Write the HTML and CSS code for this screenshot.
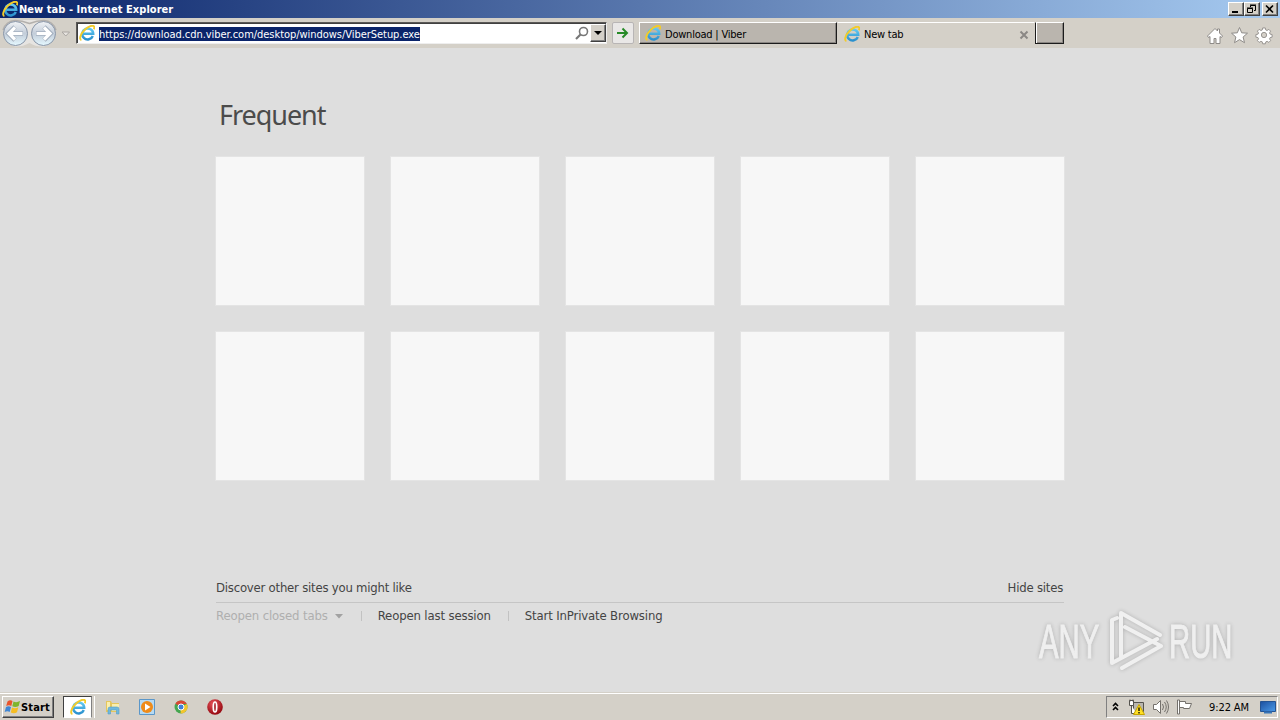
FILE: index.html
```html
<!DOCTYPE html>
<html lang="en">
<head>
    <meta charset="UTF-8">
    <title>New tab - Internet Explorer</title>
    <link rel="stylesheet" href="styles.css">
</head>
<body>
    <svg class="defs" width="0" height="0">
        <defs>
            <linearGradient id="ie-blue" x1="0" y1="0" x2="0" y2="1">
                <stop offset="0" stop-color="#62c9f2"/>
                <stop offset="1" stop-color="#2b91ce"/>
            </linearGradient>
            <linearGradient id="round" x1="0" y1="0" x2="0" y2="1">
                <stop offset="0" stop-color="#f1f3f6"/>
                <stop offset="0.5" stop-color="#c3cdd9"/>
                <stop offset="1" stop-color="#e5f8ff"/>
            </linearGradient>
            <linearGradient id="screen" x1="0" y1="0" x2="1" y2="1">
                <stop offset="0" stop-color="#1b4f9f"/>
                <stop offset="1" stop-color="#4b9be8"/>
            </linearGradient>
            <radialGradient id="opera-red" cx="0.4" cy="0.3" r="0.7">
                <stop offset="0" stop-color="#e8545b"/>
                <stop offset="1" stop-color="#95070f"/>
            </radialGradient>
            <symbol id="ie" viewBox="0 0 16 16">
                <path d="M13.800 11A5.500 5.500 0 1 1 14.200 8.800H4.500" fill="none" stroke="url(#ie-blue)" stroke-width="2.500"/>
                <path d="M2.400 15C-.2 14.500 1.500 9 5.500 5S14 -.2 15.100 1.500c.4.800.2 1.900-.3 2.700" fill="none" stroke="#f2cb2a" stroke-width="1.900"/>
            </symbol>
        </defs>
    </svg>

    <header class="titlebar">
        <svg class="ie-icon"><use href="#ie"/></svg>
        <span class="window-title">New tab - Internet Explorer</span>
        <div class="window-buttons">
            <span class="win-btn"><svg width="12" height="10"><path d="M2 8h6" stroke="#000" stroke-width="2"/></svg></span>
            <span class="win-btn"><svg width="12" height="10"><path d="M4.500 3V1.500h5v5H8M4 1h6M1.500 4.500h5v4h-5zM1 4h6" fill="none" stroke="#000"/></svg></span>
            <span class="win-btn close"><svg width="12" height="10"><path d="M2 1.500l7 7M9 1.500l-7 7" stroke="#000" stroke-width="1.600"/></svg></span>
        </div>
    </header>

    <nav class="toolbar">
        <svg class="history" width="76" height="30">
            <path d="M15 2H44A13.500 13.500 0 0 1 44 28.500Q36 29 29.500 25Q22 29 15 28.500A13.500 13.500 0 0 1 15 2" fill="#e6e4e1"/>
            <path d="M15 2.500Q22 2.500 29.500 5.500Q37 2.500 44 2.500A13 13 0 0 1 56 12M3 12A13 13 0 0 1 15 2.500" fill="none" stroke="#b3b0ad" stroke-width="1.500"/>
            <g fill="url(#round)" stroke="#8996a8">
                <circle cx="15.500" cy="15.500" r="12"/>
                <circle cx="43.500" cy="15.500" r="12"/>
            </g>
            <g fill="none" stroke="#a3afbe" stroke-width="4.600">
                <path d="M23 15.500H9M15 9l-6.500 6.500 6.500 6.500M36 15.500h14M44 9l6.500 6.500L44 22"/>
            </g>
            <g fill="none" stroke="#fff" stroke-width="3.200">
                <path d="M22.500 15.500H9M15 9.500l-6 6 6 6M36.500 15.500h14M44 9.500l6 6-6 6"/>
            </g>
            <path d="M62 14h7.500l-3.700 4z" fill="#e8e5e1" stroke="#aaa6a2"/>
        </svg>
        <div class="address">
            <svg class="ie-icon"><use href="#ie"/></svg>
            <span class="url">https://download.cdn.viber.com/desktop/windows/ViberSetup.exe</span>
            <svg class="search" width="15" height="15"><circle cx="8.500" cy="5.500" r="4" fill="none" stroke="#777" stroke-width="1.600"/><path d="M5.500 8.500L1 13" stroke="#777" stroke-width="2.200"/></svg>
            <span class="dropdown"><svg width="8" height="4"><path d="M0 0h8L4 4z"/></svg></span>
        </div>
        <span class="go"><svg width="14" height="12"><path d="M1 6h10M6.500 1.500L11 6l-4.500 4.500" fill="none" stroke="#278a27" stroke-width="2"/></svg></span>
        <div class="tab">
            <svg class="ie-icon"><use href="#ie"/></svg>
            <span class="tab-title">Download | Viber</span>
        </div>
        <div class="tab active">
            <svg class="ie-icon"><use href="#ie"/></svg>
            <span class="tab-title">New tab</span>
            <svg class="tab-close" width="10" height="10"><path d="M1.500 1.500l7 7M8.500 1.500l-7 7" stroke="#8b8885" stroke-width="2"/></svg>
        </div>
        <div class="tab new-tab"></div>
        <svg class="tools" width="68" height="20" fill="#fff" stroke="#8e8b88">
            <path d="M1.500 10L9 2.500l2.500 2.500V3h2v4l3 3-1 1.500-1.500-1V17.500h-4v-5H8v5H4v-7l-1.500 1z"/>
            <path d="M33.500 1.500l2.200 5.300 5.800.4-4.400 3.800 1.400 5.700-5-3.100-5 3.100 1.400-5.700-4.400-3.800 5.800-.4z"/>
            <g transform="translate(58 9) scale(.88)">
                <path d="M-1.500-8h3l.5 2.300 1.500.6 2-1.300 2 2-1.200 2 .6 1.400 2.300.5v3l-2.300.5-.6 1.400 1.200 2-2 2-2-1.200-1.400.6-.6 2.200h-3l-.5-2.200-1.500-.6-2 1.200-2-2 1.300-2-.6-1.400-2.400-.5v-3l2.400-.5.600-1.400-1.300-2 2-2 2 1.300 1.500-.6z"/>
                <circle r="3" fill="#d4d0c8"/>
            </g>
        </svg>
    </nav>

    <main class="page">
        <h1>Frequent</h1>
        <div class="tiles">
            <div class="tile"></div>
            <div class="tile"></div>
            <div class="tile"></div>
            <div class="tile"></div>
            <div class="tile"></div>
            <div class="tile"></div>
            <div class="tile"></div>
            <div class="tile"></div>
            <div class="tile"></div>
            <div class="tile"></div>
        </div>
        <div class="discover">
            <span class="discover-link">Discover other sites you might like</span>
            <span class="hide-link">Hide sites</span>
        </div>
        <div class="links">
            <span class="reopen disabled">Reopen closed tabs</span>
            <svg class="arrow" width="8" height="5"><path d="M0 0h8L4 4.500z" fill="#a2a2a2"/></svg>
            <span class="last-session">Reopen last session</span>
            <span class="private">Start InPrivate Browsing</span>
        </div>
        <div class="watermark">
            <span>ANY</span>
            <svg width="60" height="66" fill="none" stroke="#f3f3f3" stroke-width="4" stroke-linecap="round" stroke-linejoin="round">
                <path d="M14 49V5l39 22M18 19l36 19-39 22M10 10L5 12V55L50 31" stroke-width="4"/>
            </svg>
            <span>RUN</span>
        </div>
    </main>

    <footer class="taskbar">
        <div class="start">
            <svg width="17" height="16">
                <path d="M3.500 2.500Q6 .5 8.500 2L7.300 7Q5 5.500 2.200 7z" fill="#e9542b"/>
                <path d="M9.500 2.500Q12.500 4 16 2L14.700 7Q11.500 9 8.300 7.300z" fill="#7eb52e"/>
                <path d="M2 8Q4.500 6.500 7 8L5.700 13Q3.500 11.500.7 13z" fill="#3f86d4"/>
                <path d="M8 8.500Q11 10 14.300 8.300L13 13.300Q10 15 6.800 13.500z" fill="#f6bd22"/>
            </svg>
            <span>Start</span>
        </div>
        <div class="task-stack"><div class="task-active"><svg class="ie-icon"><use href="#ie"/></svg></div></div>
        <div class="pinned">
            <svg width="18" height="18">
                <path d="M2 3h5l1 2h7v9H2z" fill="#e5c65c"/>
                <path d="M3 4h3v8H3zM8 6h7v7H8z" fill="#f9eeae"/>
                <path d="M4 16V11q0-2 2-2h7q2 0 2 2v5h-2.500v-4h-6v4z" fill="#70b8dc" stroke="#559ec8" stroke-width=".6"/>
            </svg>
            <svg width="18" height="18">
                <path d="M1.500 1.500h15v15h-15z" fill="#b6daf3" stroke="#5b97c9"/>
                <circle cx="9" cy="9" r="6" fill="#ef8b19"/>
                <path d="M7 5.500L12.500 9 7 12.500z" fill="#fff"/>
            </svg>
            <svg width="18" height="18">
                <circle cx="9" cy="9" r="6.500" fill="#45a650"/>
                <path d="M9 9L3.400 5.700A6.500 6.500 0 0 1 14.800 6H9z" fill="#d94635"/>
                <path d="M9 9l5.800-3A6.500 6.500 0 0 1 8.500 15.500z" fill="#f3c52c"/>
                <circle cx="9" cy="9" r="3" fill="#3e80d8" stroke="#fff"/>
            </svg>
            <svg width="18" height="18">
                <circle cx="9" cy="9" r="7.800" fill="url(#opera-red)"/>
                <ellipse cx="9" cy="9" rx="1.700" ry="5" fill="#a5232a" stroke="#fff" stroke-width="1.700"/>
            </svg>
        </div>
        <div class="tray">
            <svg class="chevrons" width="8" height="10"><path d="M1 4l2.500-2.500L6 4M1 8l2.500-2.500L6 8" fill="none" stroke="#000" stroke-width="1.600"/></svg>
            <svg class="network" width="18" height="17">
                <path d="M5.500 3.500h10v9h-10z" fill="#b9b6af" stroke="#55534e"/>
                <path d="M1.500 1.500h4v5h-4zM3.500 6.500v8h5M2 .5v2M5 .5v2" fill="#fff" stroke="#55534e"/>
                <path d="M11 5.500l5.500 10h-11z" fill="#ffdf25" stroke="#c7a500"/>
                <path d="M11 8.500v3.500M11 13v1.500" stroke="#000" stroke-width="1.300"/>
            </svg>
            <svg class="volume" width="18" height="16" fill="none" stroke="#74716c">
                <path d="M1.500 5.500h3l4-4v13l-4-4h-3z" fill="#fff"/>
                <path d="M10.500 5q2 3 0 6M12.500 3q3.500 5 0 10M14.500 1.500q4 6.500 0 13"/>
            </svg>
            <svg class="flag" width="17" height="16">
                <path d="M3.500 2.500h6v2h6l-2 5h-6v-1h-4z" fill="#fff" stroke="#74716c"/>
                <path d="M1.500 1h2v14h-2z" fill="#fff" stroke="#74716c"/>
            </svg>
            <span class="clock">9:22 AM</span>
            <svg class="desktop" width="16" height="14">
                <path d="M.5 1.500h15v10H.5z" fill="url(#screen)" stroke="#245392"/>
                <path d="M4 12.500h8" stroke="#3875b7" stroke-width="2"/>
            </svg>
        </div>
    </footer>
</body>
</html>
```
FILE: styles.css
```css
* {
    box-sizing: border-box;
}
body {
    margin: 0;
    width: 1280px;
    height: 720px;
    overflow: hidden;
    display: flex;
    flex-direction: column;
    background-color: #dedede;
    color: #000;
    font-family: "DejaVu Sans Condensed", "DejaVu Sans", sans-serif;
    font-stretch: condensed;
    font-size: 11px;
    white-space: nowrap;
}
svg {
    display: block;
    flex: none;
}
.defs {
    position: absolute;
}
.ie-icon {
    width: 16px;
    height: 16px;
}
.titlebar {
    height: 18px;
    display: flex;
    align-items: center;
    padding: 0 2px;
    background: linear-gradient(90deg, #0a246a, #a6caf0);
    color: #fff;
    font-weight: bold;
}
.window-title {
    margin-left: 1px;
    letter-spacing: 0.05px;
}
.window-buttons {
    display: flex;
    margin-left: auto;
}
.win-btn {
    width: 16px;
    height: 14px;
    padding: 1px;
    background-color: #d4d0c8;
    border: 1px solid;
    border-color: #fff #404040 #404040 #fff;
    box-shadow: inset -1px -1px #808080;
}
.win-btn.close {
    margin-left: 2px;
}
.toolbar {
    height: 30px;
    display: flex;
    align-items: flex-start;
    background-color: #d4d0c8;
}
.address {
    display: flex;
    align-items: center;
    width: 531px;
    height: 22px;
    margin-top: 4px;
    padding-left: 2px;
    background-color: #fff;
    border: 1px solid;
    border-color: #5a5856 #eee #eee #5a5856;
    box-shadow: inset 1px 1px #404040;
}
.url {
    margin: 1px 0 0 4px;
    height: 14px;
    line-height: 15px;
    width: 321px;
    background-color: #0a246a;
    color: #fff;
    letter-spacing: -0.04px;
}
.search {
    margin-left: auto;
}
.dropdown {
    display: flex;
    align-items: center;
    justify-content: center;
    width: 16px;
    height: 18px;
    background-color: #d4d0c8;
    border: 1px solid;
    border-color: #fff #404040 #404040 #fff;
    box-shadow: inset -1px -1px #808080;
}
.go {
    display: flex;
    align-items: center;
    justify-content: center;
    width: 22px;
    height: 22px;
    margin: 4px 5px 0;
    background-color: #e9e7e6;
    border: 1px solid #b8b5b5;
    border-radius: 2px;
}
.tab {
    display: flex;
    align-items: center;
    gap: 4px;
    width: 198px;
    height: 22px;
    margin-top: 4px;
    padding-left: 5px;
    background-color: #bab5ae;
    border: 1px solid;
    border-color: #fff #1c1c1c #1c1c1c #fff;
    box-shadow: inset -1px -1px #8a8682;
    letter-spacing: -0.22px;
}
.tab-title {
    margin-top: 2px;
}
.tab.active {
    width: 198px;
    height: 26px;
    padding: 0 5px 3px 6px;
    background-color: #d4d0c8;
    border-color: #fff #d4d0c8 #d4d0c8;
    box-shadow: none;
}
.tab-close {
    margin: 2px 0 0 auto;
}
.tab.new-tab {
    width: 29px;
    border-left-color: #1c1c1c;
    box-shadow: inset 1px 0 #fff, inset -1px -1px #8a8682;
}
.tools {
    margin: 8px 6px 0 auto;
}
.page {
    position: relative;
    flex: 1;
    padding: 47px 216px 0;
    color: #444;
    font-size: 13px;
}
h1 {
    margin: 0 0 22px 3px;
    height: 40px;
    line-height: 40px;
    font-family: "Noto Sans", sans-serif;
    font-size: 27px;
    font-weight: normal;
    font-stretch: normal;
    color: #4b4b4b;
    letter-spacing: -1.050px;
}
.tiles {
    display: grid;
    grid-template-columns: repeat(5, 148px);
    gap: 27px;
}
.tile {
    height: 148px;
    background-color: #f7f7f7;
    box-shadow: 0 0 0 1px #e4e4e4;
}
.discover {
    display: flex;
    justify-content: space-between;
    height: 24px;
    margin-top: 99px;
    padding-right: 1px;
    line-height: 18px;
    letter-spacing: -0.22px;
    border-bottom: 1px solid #c5c5c5;
}
.links {
    display: flex;
    align-items: center;
    height: 18px;
    margin-top: 4px;
    letter-spacing: -0.14px;
}
.disabled {
    margin-top: -2px;
    color: #afafaf;
}
.arrow {
    margin-left: 7px;
}
.last-session,
.private {
    margin-left: 18px;
    padding-left: 16px;
    line-height: 10px;
    border-left: 1px solid #c2c2c2;
}
.private {
    margin-left: 17px;
}
.watermark {
    position: absolute;
    left: 1039px;
    top: 560px;
    display: flex;
    align-items: center;
    color: #f1f1f1;
    font-family: "Liberation Sans", sans-serif;
    font-size: 48px;
    -webkit-text-stroke: 1px #f1f1f1;
    filter: drop-shadow(0 0 2px #aaa);
    opacity: 0.9;
}
.watermark span {
    width: 62px;
    transform: scaleX(0.61);
    transform-origin: left;
}
.watermark svg {
    margin: 0 2px 0 6px;
}
.taskbar {
    height: 28px;
    display: flex;
    align-items: center;
    padding: 1px 2px 0;
    background-color: #d4d0c8;
    border-top: 1px solid #d4d0c8;
    box-shadow: inset 0 1px #fff;
}
.start {
    display: flex;
    align-items: center;
    width: 52px;
    height: 22px;
    padding-left: 1px;
    border: 1px solid;
    border-color: #fff #404040 #404040 #fff;
    box-shadow: inset -1px -1px #808080;
    font-weight: bold;
    letter-spacing: 0.15px;
}
.task-stack {
    width: 32px;
    height: 22px;
    margin-left: 9px;
    border-right: 1px solid #fff;
}
.task-active {
    width: 29px;
    height: 22px;
    padding: 2px 6px;
    background-color: #fff;
    border: 1px solid;
    border-color: #404040 #808080 #fff #404040;
}
.pinned {
    display: flex;
    gap: 16px;
    margin-left: 9px;
}
.tray {
    display: flex;
    align-items: center;
    width: 172px;
    height: 22px;
    margin-left: auto;
    padding-left: 5px;
    border: 1px solid;
    border-color: #808080 #fff #fff #808080;
}
.network {
    margin-left: 8px;
}
.volume {
    margin-left: 6px;
}
.flag {
    margin-left: 6px;
}
.clock {
    width: 41px;
    margin-left: 16px;
    letter-spacing: -0.1px;
}
.desktop {
    margin-left: 10px;
}
```
